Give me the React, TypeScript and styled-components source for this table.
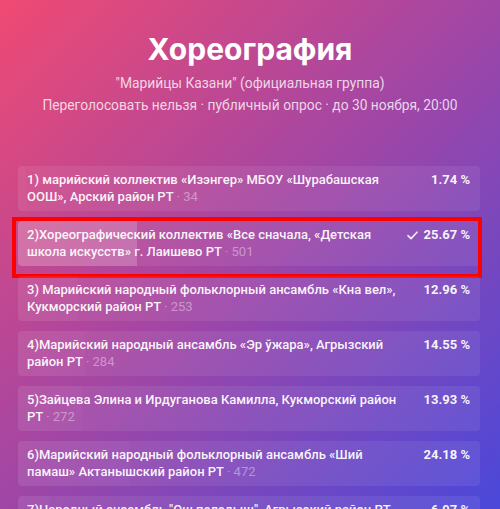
import React from "react";
import styled, { createGlobalStyle } from "styled-components";

const Global = createGlobalStyle`
  html, body { margin: 0; padding: 0; height: 100%; overflow: hidden; }
  #root { height: 100%; }
`;

const Page = styled.div`
  height: 509px;
  overflow: hidden;
  background: linear-gradient(135deg, #f04a72 0%, #a046a6 50%, #4a48da 100%);
  font-family: Roboto, "Noto Sans", sans-serif;
  color: #fff;
`;

const Header = styled.header`
  display: flex;
  flex-direction: column;
  align-items: center;
  padding-top: 31px;
`;

const Title = styled.h1`
  margin: 0 0 5px;
  font-family: Inter, "Open Sans", sans-serif;
  font-weight: 700;
  font-size: 30px;
  line-height: 36px;
`;

const Sub = styled.div`
  font-size: 13.8px;
  line-height: 22px;
  color: rgba(255, 255, 255, 0.78);
`;

const List = styled.div`
  display: flex;
  flex-direction: column;
  gap: 10px;
  margin: 50px 20px 0 18px;
`;

const Card = styled.div<{ $pct: number; $mine?: boolean }>`
  position: relative;
  display: flex;
  align-items: flex-start;
  min-height: 45px;
  box-sizing: border-box;
  padding: 6px 10px 6px 9px;
  border-radius: 4px;
  background: linear-gradient(
    to right,
    ${(p) => (p.$mine ? "rgba(255,255,255,0.23)" : "rgba(255,255,255,0.09)")} ${(p) => p.$pct}%,
    rgba(255, 255, 255, 0.07) ${(p) => p.$pct}%
  );
`;

const Label = styled.div`
  flex: 1;
  font-size: 13px;
  font-weight: 500;
  line-height: 16.5px;
  color: rgba(255, 255, 255, 0.94);
`;

const Count = styled.span`
  font-weight: 400;
  color: rgba(255, 255, 255, 0.4);
`;

const Percent = styled.div`
  width: 70px;
  display: flex;
  justify-content: flex-end;
  align-items: center;
  gap: 6px;
  font-size: 13px;
  font-weight: 700;
  line-height: 16.5px;
  color: rgba(255, 255, 255, 0.94);
`;

const Marker = styled.div`
  position: absolute;
  left: -6px;
  top: -4px;
  right: -2px;
  bottom: -12px;
  border: 4px solid #ff0000;
  pointer-events: none;
`;

const Check = () => (
  <svg width="11" height="9" viewBox="0 0 11 9" fill="none">
    <path d="M1 4.6 L4 7.6 L10 1.2" stroke="rgba(255,255,255,0.9)" strokeWidth="1.6" strokeLinecap="round" strokeLinejoin="round" />
  </svg>
);

const options = [
  { text: "1) марийский коллектив «Изэнгер» МБОУ «Шурабашская ООШ», Арский район РТ", count: 34, pct: 1.74 },
  { text: "2)Хореографический коллектив «Все сначала, «Детская школа искусств» г. Лаишево РТ", count: 501, pct: 25.67, mine: true },
  { text: "3) Марийский народный фольклорный ансамбль «Кна вел», Кукморский район РТ", count: 253, pct: 12.96 },
  { text: "4)Марийский народный ансамбль «Эр ўжара», Агрызский район РТ", count: 284, pct: 14.55 },
  { text: "5)Зайцева Элина и Ирдуганова Камилла, Кукморский район РТ", count: 272, pct: 13.93 },
  { text: "6)Марийский народный фольклорный ансамбль «Ший памаш» Актанышский район РТ", count: 472, pct: 24.18 },
  { text: "7)Народный ансамбль \"Ош пеледыш\", Агрызский район РТ", count: 136, pct: 6.97 },
];

export default function App() {
  return (
    <Page>
      <Global />
      <Header>
        <Title>Хореография</Title>
        <Sub>"Марийцы Казани" (официальная группа)</Sub>
        <Sub>Переголосовать нельзя · публичный опрос · до 30 ноября, 20:00</Sub>
      </Header>
      <List>
        {options.map((o) => (
          <Card key={o.text} $pct={o.pct} $mine={o.mine}>
            <Label>
              {o.text} <Count>· {o.count}</Count>
            </Label>
            <Percent>
              {o.mine && <Check />}
              <span>{o.pct.toFixed(2)} %</span>
            </Percent>
            {o.mine && <Marker />}
          </Card>
        ))}
      </List>
    </Page>
  );
}
